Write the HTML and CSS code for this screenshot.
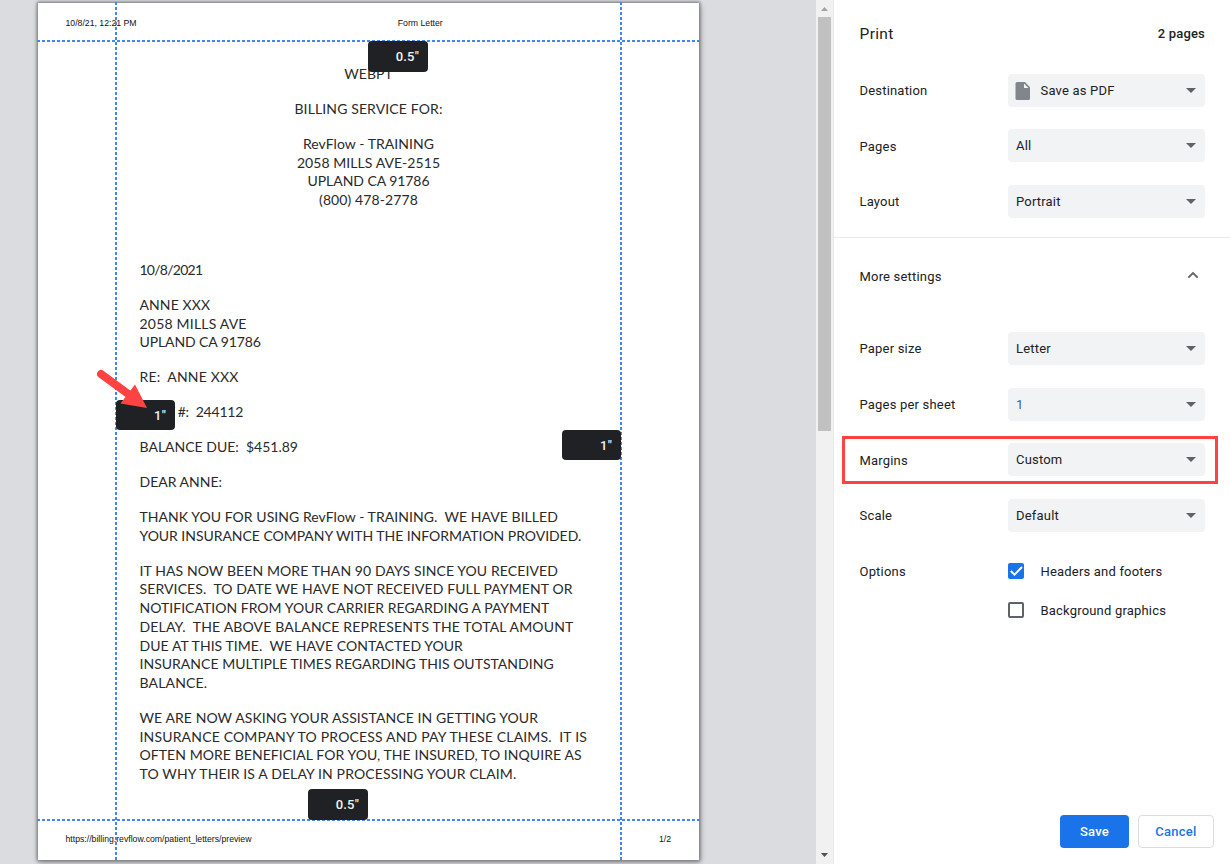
FILE: index.html
```html
<!DOCTYPE html>
<html lang="en">
<head>
<meta charset="utf-8">
<title>Print</title>
<link rel="stylesheet" href="styles.css">
</head>
<body>
<div class="dialog">
  <main class="preview">
    <article class="sheet">
      <header class="sheet-header"><span>10/8/21, 12:21 PM</span><span class="doc-title">Form Letter</span><span></span></header>
      <div class="letter">
        <div class="center">
          <p><span class="l1">WEBPT</span></p>
          <p><span class="l2">BILLING SERVICE FOR:</span></p>
          <p><span class="l3">RevFlow - TRAINING</span><br><span class="l4">2058 MILLS AVE-2515</span><br><span class="l5">UPLAND CA 91786</span><br><span class="l6">(800) 478-2778</span></p>
        </div>
        <p class="date"><span class="l7">10/8/2021</span></p>
        <p><span class="l8">ANNE XXX</span><br><span class="l9">2058 MILLS AVE</span><br><span class="l10">UPLAND CA 91786</span></p>
        <p><span class="l11">RE:  ANNE XXX</span></p>
        <p><span class="l12">ACCT #:  244112</span></p>
        <p><span class="l13">BALANCE DUE:  $451.89</span></p>
        <p><span class="l14">DEAR ANNE:</span></p>
        <p><span class="l15">THANK YOU FOR USING RevFlow - TRAINING.  WE HAVE BILLED</span><br><span class="l16">YOUR INSURANCE COMPANY WITH THE INFORMATION PROVIDED.</span></p>
        <p><span class="l17">IT HAS NOW BEEN MORE THAN 90 DAYS SINCE YOU RECEIVED</span><br><span class="l18">SERVICES.  TO DATE WE HAVE NOT RECEIVED FULL PAYMENT OR</span><br><span class="l19">NOTIFICATION FROM YOUR CARRIER REGARDING A PAYMENT</span><br><span class="l20">DELAY.  THE ABOVE BALANCE REPRESENTS THE TOTAL AMOUNT</span><br><span class="l21">DUE AT THIS TIME.  WE HAVE CONTACTED YOUR</span><br><span class="l22">INSURANCE MULTIPLE TIMES REGARDING THIS OUTSTANDING</span><br><span class="l23">BALANCE.</span></p>
        <p><span class="l24">WE ARE NOW ASKING YOUR ASSISTANCE IN GETTING YOUR</span><br><span class="l25">INSURANCE COMPANY TO PROCESS AND PAY THESE CLAIMS.  IT IS</span><br><span class="l26">OFTEN MORE BENEFICIAL FOR YOU, THE INSURED, TO INQUIRE AS</span><br><span class="l27">TO WHY THEIR IS A DELAY IN PROCESSING YOUR CLAIM.</span></p>
      </div>
      <footer class="sheet-footer"><span>https://billing.revflow.com/patient_letters/preview</span><span>1/2</span></footer>
      <i class="guide horizontal top"></i><i class="guide horizontal bottom"></i>
      <i class="guide vertical left"></i><i class="guide vertical right"></i>
      <span class="margin-box at-top">0.5"</span>
      <span class="margin-box at-left">1"</span>
      <span class="margin-box at-right">1"</span>
      <span class="margin-box at-bottom">0.5"</span>
      <svg class="arrow" width="54" height="46" viewBox="0 0 54 46"><path d="M4 8l30 22" stroke="#ff4242" stroke-width="8" stroke-linecap="round"/><path d="M38 18.500L50 42L23.500 37.500Z" fill="#ff4242"/></svg>
    </article>
  </main>
  <div class="scrollbar">
    <svg width="17" height="17"><path d="M5 11h7L8.500 7z" fill="#a3a3a3"/></svg>
    <div class="track"><div class="thumb"></div></div>
    <svg width="17" height="17"><path d="M5 6h7l-3.500 4z" fill="#505050"/></svg>
  </div>
  <aside class="sidebar">
    <header class="side-header"><h1>Print</h1><strong>2 pages</strong></header>
    <section class="basic">
      <div class="row"><span>Destination</span><div class="select"><svg class="file" width="16" height="20" viewBox="0 0 16 20"><path d="M2 1H10l5 5.200V17.500a1.500 1.500 0 0 1-1.500 1.500h-11.500A1.500 1.500 0 0 1 .5 17.500v-15A1.500 1.500 0 0 1 2 1z" fill="#80868b"/><path d="M9 2.500v4.500h4.500z" fill="#f1f3f4"/></svg><span>Save as PDF</span></div></div>
      <div class="row lower"><span>Pages</span><div class="select"><span>All</span></div></div>
      <div class="row"><span>Layout</span><div class="select"><span>Portrait</span></div></div>
    </section>
    <div class="more"><span>More settings</span><svg width="12" height="8" viewBox="0 0 12 8"><path d="M1.300 6.700L6 2l4.700 4.700" fill="none" stroke="#5f6368" stroke-width="1.900"/></svg></div>
    <section class="advanced">
      <div class="row"><span>Paper size</span><div class="select"><span>Letter</span></div></div>
      <div class="row"><span>Pages per sheet</span><div class="select"><span class="one">1</span></div></div>
      <div class="row lower marked"><span>Margins</span><div class="select"><span>Custom</span></div></div>
      <div class="row"><span>Scale</span><div class="select"><span>Default</span></div></div>
      <div class="row options"><span>Options</span><div class="checks">
        <div class="check"><svg width="16" height="16" viewBox="0 0 16 16"><rect width="16" height="16" rx="2" fill="#1a73e8"/><path d="M2.800 8l3.700 3.700L14 4" fill="none" stroke="#fff" stroke-width="2"/></svg>Headers and footers</div>
        <div class="check"><svg width="16" height="16" viewBox="0 0 16 16"><rect x="1" y="1" width="14" height="14" rx="1" fill="#fff" stroke="#5f6368" stroke-width="2"/></svg>Background graphics</div>
      </div></div>
    </section>
    <footer class="actions"><button class="save">Save</button><button class="cancel">Cancel</button></footer>
  </aside>
</div>
</body>
</html>
```
FILE: styles.css
```css
* { box-sizing: border-box; }
body { margin: 0; overflow: hidden; }
.dialog { display: flex; width: 1230px; height: 864px; font: 13px Roboto, sans-serif; letter-spacing: .19px; color: #202124; background: #fff; }
.preview { flex: 1; padding: 3px 0 0 38px; background: #dadce0; overflow: hidden; }
.sheet { position: relative; display: flex; flex-direction: column; width: 661px; height: 857px; background: #fff; box-shadow: 0 0 3px 1px #77797c, 1px 2px 6px rgba(0,0,0,.35); }
.sheet-header, .sheet-footer { display: flex; justify-content: space-between; padding: 0 28px 0 27.500px; font: 8.700px/12px "Liberation Sans", Arial, sans-serif; letter-spacing: 0; color: #111; }
.sheet-header { padding-top: 14px; height: 38px; }
.doc-title { margin-right: -33px; }
.sheet-footer { height: 40px; padding-top: 13px; }
.letter { flex: 1; padding: 24.100px 0 0 101.500px; font: 14px/18.700px Lato, sans-serif; letter-spacing: 0; color: #2a2a2a; }
.letter p { margin: 0 0 16.250px; }
.letter p span { white-space: pre; }
.center { width: 458px; text-align: center; }
.letter .date { margin-top: 51.200px; }
.l2 { letter-spacing: .12px; }
.l3, .l4 { letter-spacing: .06px; }
.l5 { letter-spacing: -.06px; }
.l6 { letter-spacing: .1px; }
.l7 { letter-spacing: -.75px; }
.l8 { letter-spacing: .1px; }
.l9 { letter-spacing: .2px; }
.l10 { letter-spacing: -.1px; }
.l11 { letter-spacing: .16px; }
.l12 { letter-spacing: -.2px; }
.l15 { letter-spacing: .05px; }
.l16 { letter-spacing: -.04px; }
.l17 { letter-spacing: .1px; }
.l18 { letter-spacing: .11px; }
.l19, .l22 { letter-spacing: .02px; }
.l20 { letter-spacing: .16px; }
.l21 { letter-spacing: .06px; }
.l23 { letter-spacing: .15px; }
.l24 { letter-spacing: .08px; }
.l25 { letter-spacing: .17px; }
.l26 { letter-spacing: .07px; }
.l27 { letter-spacing: .12px; }
.guide { position: absolute; }
.horizontal { left: -1px; width: 664px; height: 2px; background: repeating-linear-gradient(90deg, #4285f4 0 3px, transparent 3px 5px); }
.vertical { top: -1px; height: 858px; width: 2px; background: repeating-linear-gradient(#4285f4 0 3px, transparent 3px 5px); }
.top { top: 37px; } .bottom { top: 816px; }
.left { left: 77px; } .right { left: 582px; }
.margin-box { position: absolute; width: 60px; height: 31px; padding-right: 9px; border-radius: 4px; background: #202124; color: #f1f3f4; font-weight: 500; line-height: 31px; text-align: right; }
.at-top { left: 330px; top: 38px; }
.at-bottom { left: 270px; top: 786px; }
.at-left { left: 78px; top: 397px; width: 59px; height: 30px; }
.at-right { left: 524px; top: 427px; width: 59px; height: 30px; }
.arrow { position: absolute; left: 59px; top: 363px; }
.scrollbar { display: flex; flex-direction: column; width: 18px; background: #f1f1f1; border-right: 1px solid #e8e8e8; }
.track { flex: 1; padding-left: 2px; }
.thumb { width: 13px; height: 414px; background: #c1c1c1; }
.sidebar { display: flex; flex-direction: column; width: 396px; }
.side-header { display: flex; justify-content: space-between; align-items: center; height: 67px; padding: 0 25px; }
.side-header h1 { margin: 0; padding-left: .5px; font-size: 15.500px; font-weight: 400; letter-spacing: .35px; }
.side-header strong { font-weight: 500; }
.basic { height: 171px; padding: 7px 25px 0 25.500px; border-bottom: 1px solid #e8eaed; }
.row { display: flex; justify-content: space-between; align-items: center; height: 33px; margin-bottom: 23px; }
.row:first-child { margin-bottom: 22px; }
.select { position: relative; display: flex; align-items: center; width: 197px; height: 33px; padding-left: 8px; border-radius: 4px; background: #f1f3f4; }
.select::after { content: ""; position: absolute; right: 9px; top: 14px; border: 5px solid transparent; border-top-color: #5f6368; border-bottom: 0; }
.file { margin: 0 10px 0 -1.500px; }
.lower > span { position: relative; top: 1px; }
.one { color: #3c6591; }
.more { display: flex; justify-content: space-between; align-items: center; height: 77px; padding: 0 31px 0 25.500px; }
.more svg { margin-bottom: 3px; }
.advanced { padding: 17px 25px 0 25.500px; }
.advanced .row:first-child { margin-bottom: 23px; }
.marked { position: relative; margin: -1px 0 23px; }
.marked::after { content: ""; position: absolute; inset: -7px -13px -8px -17.500px; border: 3px solid #ff4242; }
.options { align-items: flex-start; height: 55px; padding-top: 8px; }
.options > span { padding-top: 1px; }
.checks { display: flex; flex-direction: column; gap: 23px; width: 197px; }
.check { display: flex; align-items: center; gap: 16.500px; height: 16px; }
.actions { display: flex; justify-content: flex-end; gap: 9px; margin-top: auto; padding: 0 16px 16px 0; }
.actions button { height: 33px; padding: 0; border-radius: 4px; font: 500 13px Roboto, sans-serif; letter-spacing: .25px; }
.save { width: 69px; border: 0; background: #1a73e8; color: #fff; }
.cancel { width: 76px; border: 1px solid #dadce0; background: #fff; color: #1a73e8; }
```
